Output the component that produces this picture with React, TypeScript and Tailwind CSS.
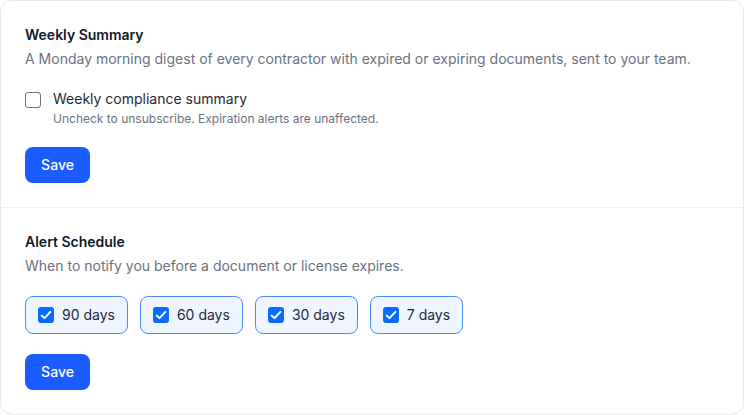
const alertOptions = ["90 days", "60 days", "30 days", "7 days"];

function CheckMark() {
  return (
    <span className="flex h-4 w-4 shrink-0 items-center justify-center rounded-[3px] bg-[#0b6bff]">
      <svg viewBox="0 0 16 16" className="h-[14px] w-[14px]" fill="none" aria-hidden="true">
        <path d="M3 8.6 6.3 11.6 13 4.4" stroke="#fff" strokeWidth="2.2" strokeLinecap="round" strokeLinejoin="round" />
      </svg>
    </span>
  );
}

function SaveButton() {
  return (
    <button className="h-9 w-[65px] rounded-lg bg-[#1a5cff] text-sm font-medium text-white">
      Save
    </button>
  );
}

export default function App() {
  return (
    <div className="min-h-[415px] w-[744px] bg-white font-['Inter','Liberation_Sans',sans-serif]">
      <div className="overflow-hidden rounded-xl border border-[#e5e7eb] bg-white">
        <section className="flex flex-col items-start px-6 pb-6 pt-6">
          <h2 className="text-sm leading-5 font-semibold text-[#111827]">Weekly Summary</h2>
          <p className="mt-1 text-sm leading-5 text-[#6b7280]">
            A Monday morning digest of every contractor with expired or expiring documents, sent to your team.
          </p>
          <label className="mt-5 flex items-start gap-3">
            <span className="mt-[3px] h-4 w-4 shrink-0 rounded-[3px] border border-[#6b7280] bg-white" />
            <span className="flex flex-col">
              <span className="text-sm leading-5 text-[#1f2937]">Weekly compliance summary</span>
              <span className="mt-0.5 text-xs leading-4 text-[#6b7280]">
                Uncheck to unsubscribe. Expiration alerts are unaffected.
              </span>
            </span>
          </label>
          <div className="mt-5">
            <SaveButton />
          </div>
        </section>

        <section className="flex flex-col items-start border-t border-[#f0f1f3] px-6 pb-6 pt-6">
          <h2 className="text-sm leading-5 font-semibold text-[#111827]">Alert Schedule</h2>
          <p className="mt-1 text-sm leading-5 text-[#6b7280]">
            When to notify you before a document or license expires.
          </p>
          <div className="mt-5 flex gap-3">
            {alertOptions.map((opt) => (
              <label
                key={opt}
                className="flex items-center gap-2 rounded-lg border border-[#4b8df8] bg-[#eff5ff] px-3 py-2"
              >
                <CheckMark />
                <span className="text-sm leading-5 text-[#1f2937]">{opt}</span>
              </label>
            ))}
          </div>
          <div className="mt-5">
            <SaveButton />
          </div>
        </section>
      </div>
    </div>
  );
}
